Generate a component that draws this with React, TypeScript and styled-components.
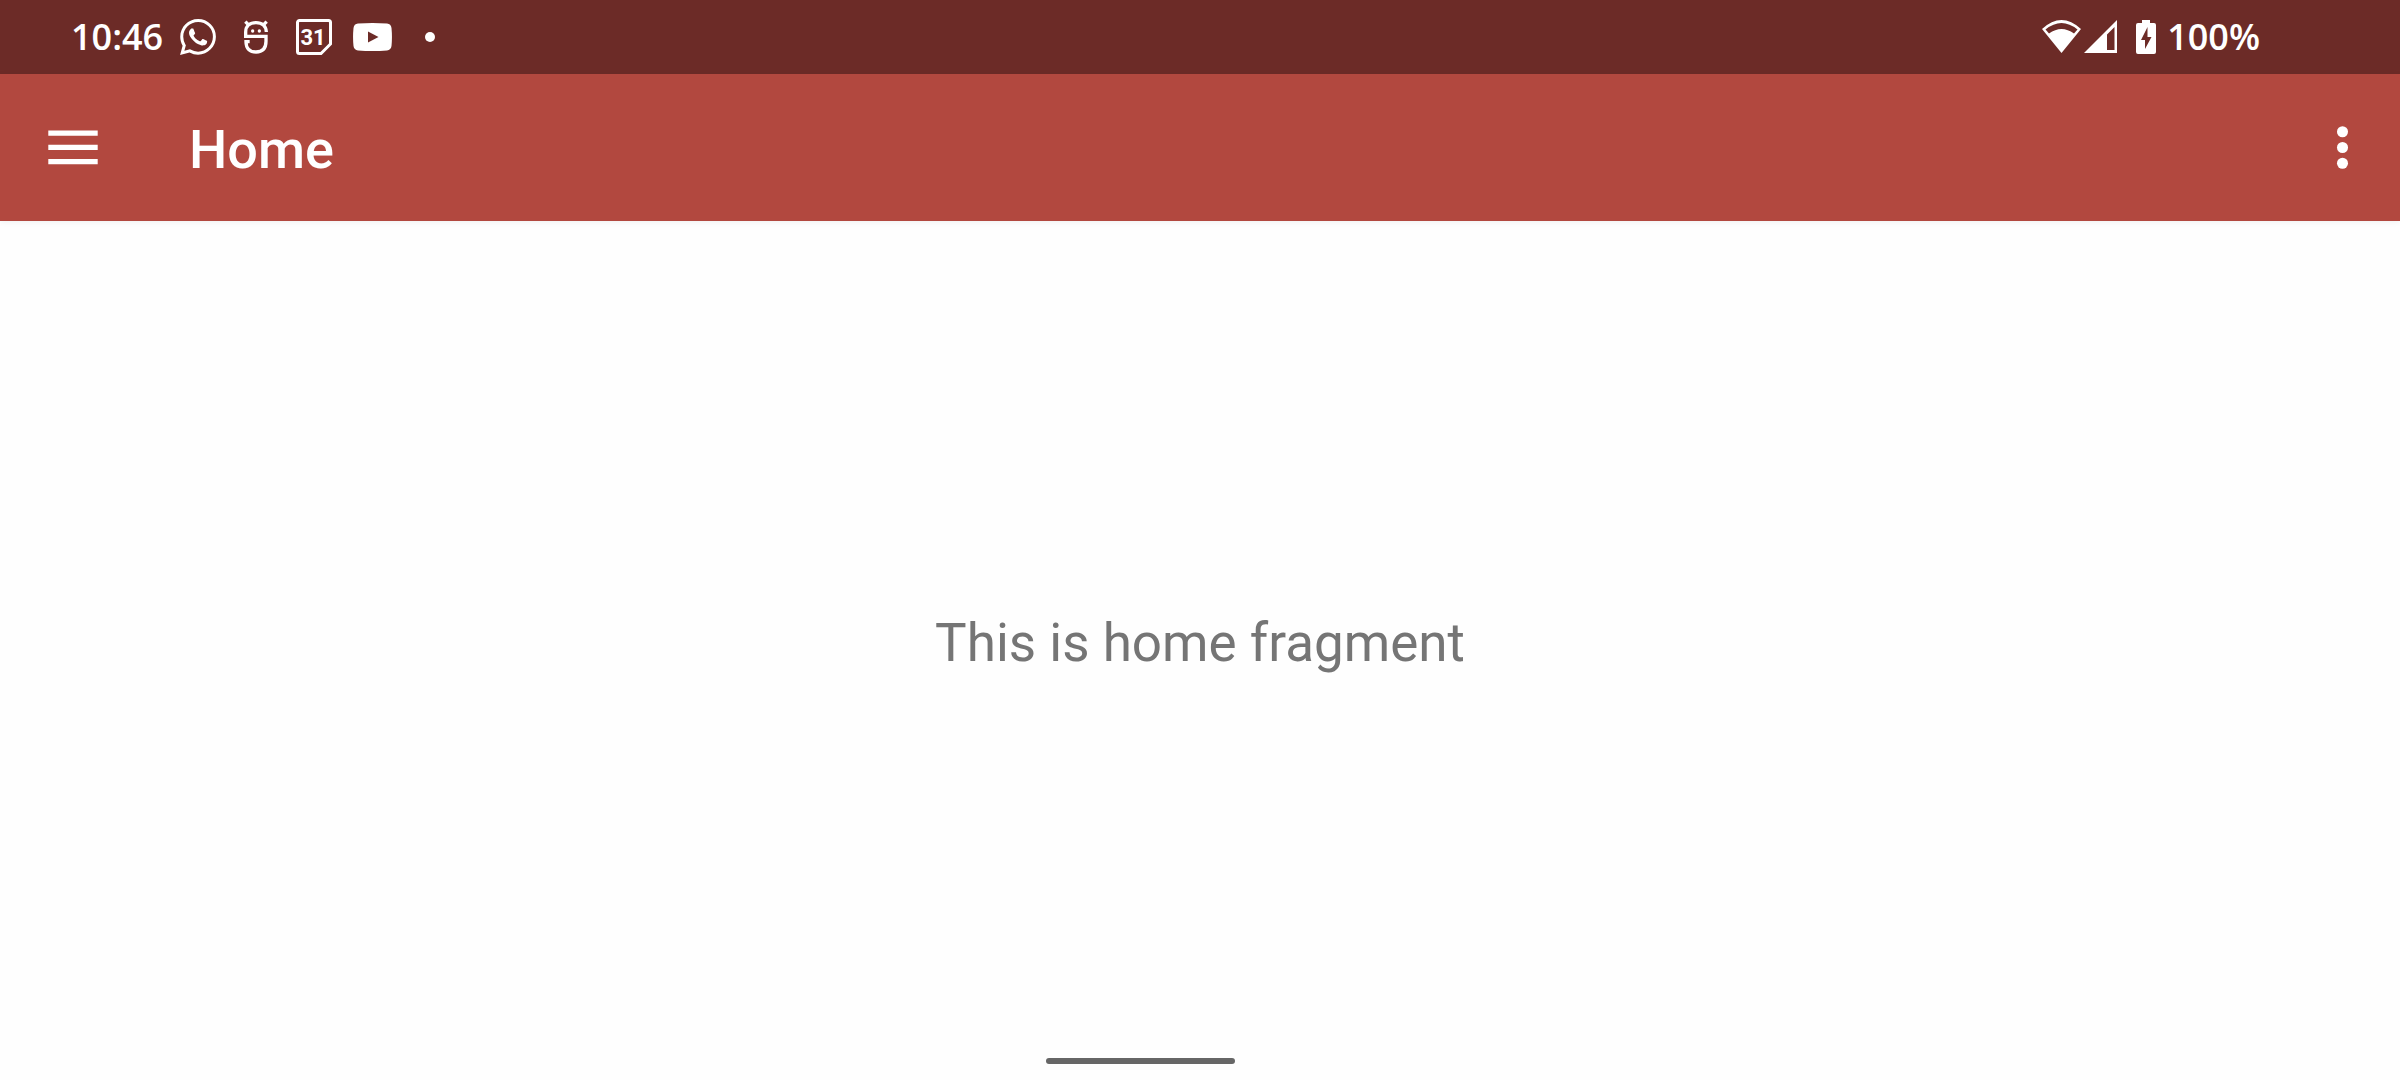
import React from "react";
import styled, { createGlobalStyle } from "styled-components";
import { SiWhatsapp } from "react-icons/si";

const GlobalStyle = createGlobalStyle`
  * { box-sizing: border-box; }
  body { margin: 0; background: #fefefe; }
`;

const Screen = styled.div`
  display: flex;
  flex-direction: column;
  min-height: 100vh;
  font-family: Roboto, sans-serif;
  background: #fefefe;
`;

const StatusBar = styled.div`
  display: flex;
  align-items: center;
  justify-content: space-between;
  height: 74px;
  padding: 0 140px 0 71px;
  color: #fff;
  background: #6c2b27;
`;

const StatusGroup = styled.div<{ $gap: number }>`
  display: flex;
  align-items: center;
  gap: ${(p) => p.$gap}px;
`;

const StatusText = styled.span`
  font: 600 36px/48px "Open Sans", sans-serif;
`;

const Notifications = styled.div`
  display: flex;
  align-items: center;
  margin-left: 6px;
`;

const Slot = styled.span`
  display: flex;
  align-items: center;
  justify-content: center;
  width: 58px;
  height: 40px;
`;

const Dot = styled.span`
  width: 10px;
  height: 10px;
  border-radius: 50%;
  background: #fff;
`;

const Drawing = styled.svg`
  display: block;
  flex: none;
`;

const Toolbar = styled.header`
  display: flex;
  align-items: center;
  height: 147px;
  padding: 0 26px 0 40px;
  color: #fff;
  background: #b2483f;
  box-shadow: 0 1px 6px rgba(0, 0, 0, 0.06);
`;

const IconButton = styled.button`
  display: flex;
  padding: 0;
  border: 0;
  color: inherit;
  background: none;
  cursor: pointer;
`;

const Title = styled.h1`
  flex: 1;
  margin: 0 0 0 83px;
  padding-top: 4px;
  font-size: 54px;
  font-weight: 500;
  line-height: 64px;
`;

const Content = styled.main`
  flex: 1;
  display: flex;
  align-items: center;
  justify-content: center;
  padding-top: 6px;
`;

const Message = styled.p`
  margin: 0;
  color: #757575;
  font-size: 53px;
  line-height: 64px;
`;

const GestureArea = styled.footer`
  display: flex;
  justify-content: center;
  padding: 0 119px 16px 0;
`;

const GestureBar = styled.div`
  width: 189px;
  height: 6px;
  border-radius: 3px;
  background: #666;
`;

const RobotIcon = () => (
  <Drawing width="24" height="34" viewBox="0 0 72 102" fill="none" stroke="#fff" strokeWidth="10">
    <path d="M67 36C66 18 54 8 36 8S5 18 5 36V49H66V64C66 86 54 96 36 96S6 86 6 65H17" />
    <path d="M4 5L16 17M68 5L56 17" />
    <circle cx="26" cy="33" r="5" fill="#fff" stroke="none" />
    <circle cx="46" cy="33" r="5" fill="#fff" stroke="none" />
  </Drawing>
);

const CalendarIcon = () => (
  <Drawing width="36" height="36" viewBox="0 0 36 36">
    <path d="M3.500 1.500H32.500A2 2 0 0 1 34.500 3.500V25L25 34.500H3.500A2 2 0 0 1 1.500 32.500V3.500A2 2 0 0 1 3.500 1.500Z" fill="none" stroke="#fff" strokeWidth="3" />
    <text x="17" y="26" textAnchor="middle" fill="#fff" fontFamily="Roboto, sans-serif" fontWeight="700" fontSize="22">31</text>
  </Drawing>
);

const VideoIcon = () => (
  <Drawing width="39" height="28" viewBox="0 0 39 28">
    <path fill="#fff" fillRule="evenodd" d="M5 .6Q19.500-.5 34 .6Q38 1 38.500 5Q39.400 14 38.500 23Q38 27 34 27.400Q19.500 28.500 5 27.400Q1 27 .5 23Q-.4 14 .5 5Q1 1 5 .6ZM15 8.500V19.500L25.500 14Z" />
  </Drawing>
);

const SignalIcons = () => (
  <Drawing width="76" height="34" viewBox="0 0 76 34" fill="#fff">
    <path fillRule="evenodd" d="M0 9Q19.500-9 39 9L19.500 33ZM3.500 9.500L7 13.500Q19.500 4.500 32 13.500L35.500 9.500Q19.500-3.500 3.500 9.500Z" />
    <path fillRule="evenodd" d="M75 0V33H42ZM65 14.500V30H72.500V7Z" />
  </Drawing>
);

const BatteryIcon = () => (
  <Drawing width="20" height="34" viewBox="0 0 20 34">
    <path fill="#fff" fillRule="evenodd" d="M6 0H14V3H18Q20 3 20 5V32Q20 34 18 34H2Q0 34 0 32V5Q0 3 2 3H6ZM11.500 7L5 20H9V29L15.500 17H11.500Z" />
  </Drawing>
);

const MenuIcon = () => (
  <Drawing width="66" height="66" viewBox="0 0 66 66" fill="currentColor">
    <path d="M8.300 15.500H57.700V20.800H8.300ZM8.300 29.700H57.700V35H8.300ZM8.300 43.900H57.700V49.200H8.300Z" />
  </Drawing>
);

const MoreIcon = () => (
  <Drawing width="63" height="63" viewBox="0 0 24 24" fill="currentColor">
    <circle cx="12" cy="6" r="2.100" />
    <circle cx="12" cy="12" r="2.100" />
    <circle cx="12" cy="18" r="2.100" />
  </Drawing>
);

export default function App() {
  return (
    <Screen>
      <GlobalStyle />
      <StatusBar>
        <StatusGroup $gap={0}>
          <StatusText>10:46</StatusText>
          <Notifications>
            <Slot><SiWhatsapp size={36} /></Slot>
            <Slot><RobotIcon /></Slot>
            <Slot><CalendarIcon /></Slot>
            <Slot><VideoIcon /></Slot>
            <Slot><Dot /></Slot>
          </Notifications>
        </StatusGroup>
        <StatusGroup $gap={18}>
          <SignalIcons />
          <StatusGroup $gap={11}>
            <BatteryIcon />
            <StatusText>100%</StatusText>
          </StatusGroup>
        </StatusGroup>
      </StatusBar>
      <Toolbar>
        <IconButton type="button" aria-label="Open navigation drawer"><MenuIcon /></IconButton>
        <Title>Home</Title>
        <IconButton type="button" aria-label="More options"><MoreIcon /></IconButton>
      </Toolbar>
      <Content>
        <Message>This is home fragment</Message>
      </Content>
      <GestureArea>
        <GestureBar />
      </GestureArea>
    </Screen>
  );
}
